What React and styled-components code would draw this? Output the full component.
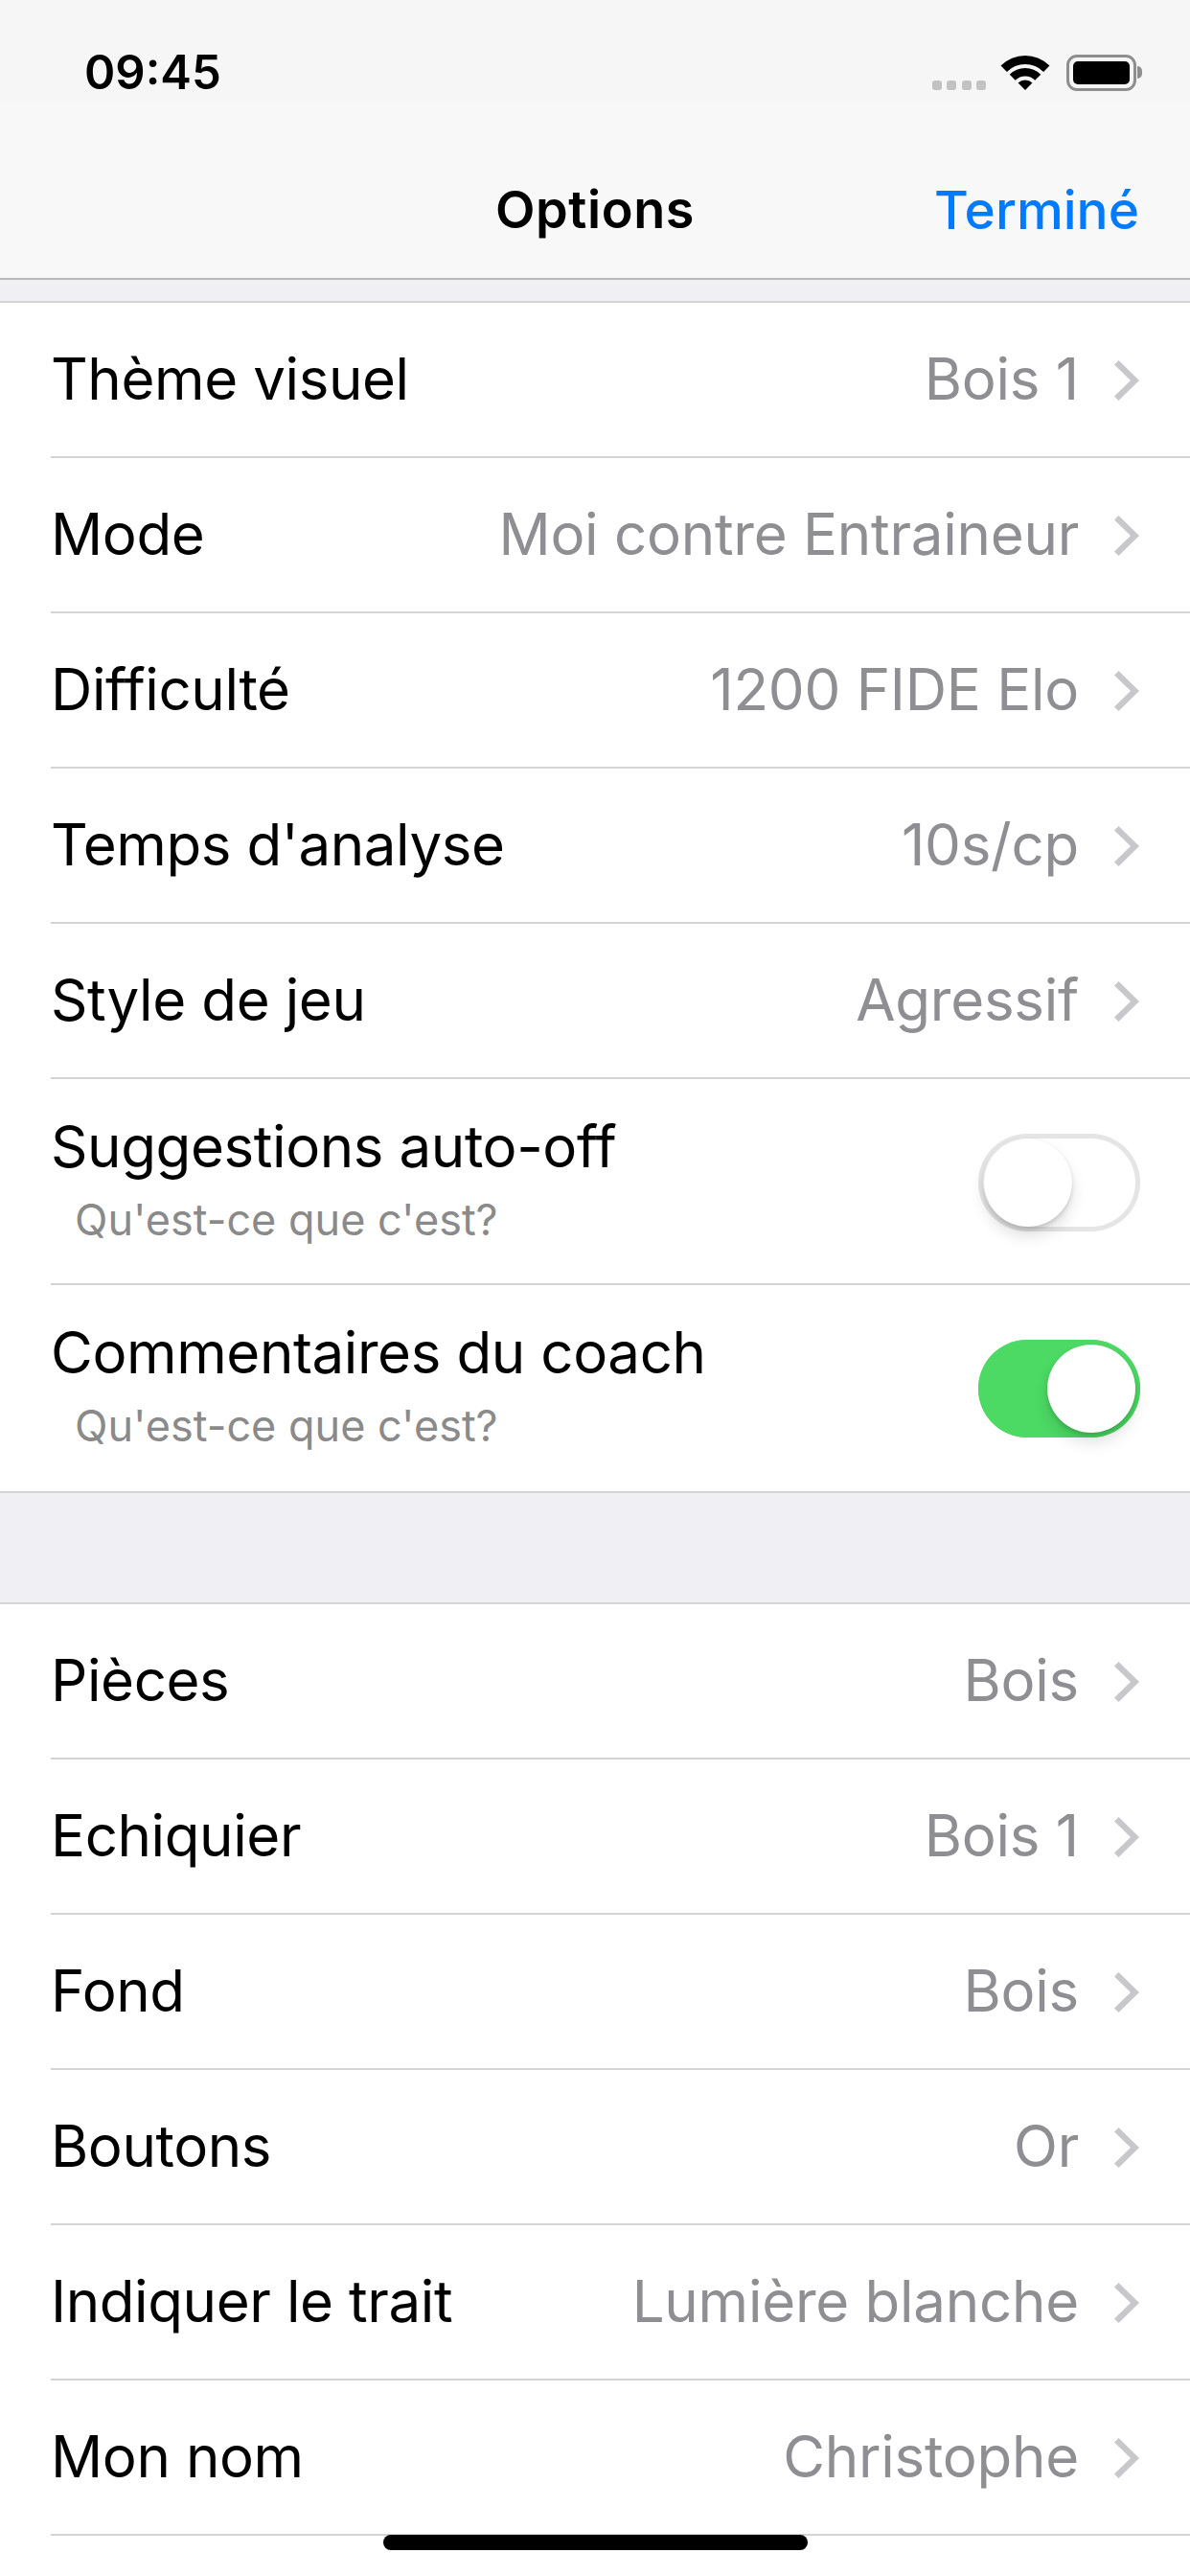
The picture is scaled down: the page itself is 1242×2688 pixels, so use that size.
import React from "react";
import styled, { createGlobalStyle } from "styled-components";

const Global = createGlobalStyle`
  html, body { margin: 0; padding: 0; background: #fff; }
  body { font-family: Inter, "Liberation Sans", sans-serif; -webkit-font-smoothing: antialiased; }
`;

const Screen = styled.div`
  position: relative;
  width: 1242px;
  height: 2688px;
  overflow: hidden;
  background: #fff;
`;
const Header = styled.header`
  background: #f8f8f8;
  height: 290px;
  border-bottom: 2px solid #b8b8ba;
  box-sizing: content-box;
`;
const StatusBar = styled.div`
  height: 105px;
  background: #f6f6f6;
  display: flex;
  align-items: flex-start;
  justify-content: space-between;
  padding: 51px 56px 0 88px;
  box-sizing: border-box;
`;
const Clock = styled.span`
  font-size: 49px;
  line-height: 49px;
  font-weight: 600;
  color: #000;
`;
const StatusIcons = styled.div`
  display: flex;
  align-items: flex-start;
  margin-top: 6px;
`;
const Dots = styled.div`
  display: flex;
  gap: 5.5px;
  margin-top: 27px;
  margin-right: 15px;
`;
const Dot = styled.i`
  display: block;
  width: 10px;
  height: 10px;
  border-radius: 3px;
  background: #c2c2c2;
`;
const Battery = styled.div`
  position: relative;
  width: 73px;
  height: 38px;
  margin-left: 17px;
  padding: 4px;
  box-sizing: border-box;
  border: 3px solid #8e8e8e;
  border-radius: 11px;
  &::after {
    content: "";
    position: absolute;
    right: -9px;
    top: 9px;
    width: 5px;
    height: 13px;
    border-radius: 0 6px 6px 0;
    background: #8e8e8e;
  }
`;
const BatteryFill = styled.div`
  height: 100%;
  background: #000;
  border-radius: 5px;
`;
const NavBar = styled.nav`
  height: 185px;
  display: grid;
  grid-template-columns: 1fr auto 1fr;
  align-items: center;
  padding: 42px 53px 0;
  box-sizing: border-box;
`;
const NavTitle = styled.h1`
  grid-column: 2;
  margin: 0;
  font-size: 54px;
  line-height: 60px;
  font-weight: 600;
  letter-spacing: 0.6px;
  color: #000;
`;
const NavAction = styled.span`
  grid-column: 3;
  justify-self: end;
  font-size: 55px;
  line-height: 60px;
  font-weight: 500;
  color: #007aff;
`;
const Spacer = styled.div`
  height: ${(p) => p.$h}px;
  background: #efeff4;
`;
const Section = styled.section`
  background: #fff;
  border-top: 2px solid #d4d4d8;
  border-bottom: ${(p) => (p.$closed ? "2px solid #d4d4d8" : "0")};
`;
const Row = styled.div`
  position: relative;
  display: flex;
  align-items: center;
  justify-content: space-between;
  height: ${(p) => (p.$tall ? 215 : 162)}px;
  box-sizing: border-box;
  padding: 0 53px 4px 53px;
  &::after {
    content: ${(p) => (p.$last ? "none" : '""')};
    position: absolute;
    left: 53px;
    right: 0;
    bottom: 0;
    height: 2px;
    background: #d4d4d6;
  }
`;
const Label = styled.span`
  font-size: 60px;
  line-height: 60px;
  font-weight: 400;
  letter-spacing: -0.4px;
  color: #000;
  white-space: nowrap;
`;
const Value = styled.span`
  display: flex;
  align-items: center;
  gap: 37px;
  font-size: 60px;
  line-height: 60px;
  letter-spacing: -0.25px;
  color: #8e8e93;
  white-space: nowrap;
`;
const Chevron = styled.svg`
  width: 26px;
  height: 42px;
  margin-top: 4px;
  display: block;
  flex: none;
`;
const LabelStack = styled.div`
  display: flex;
  flex-direction: column;
  gap: 22px;
`;
const Hint = styled.span`
  margin-left: 25px;
  font-size: 45px;
  line-height: 50px;
  color: #8a8a8a;
  white-space: nowrap;
`;
const Track = styled.div`
  position: relative;
  flex: none;
  width: 169px;
  height: 102px;
  margin: 4px -1px 0 0;
  border-radius: 51px;
  background: ${(p) => (p.$on ? "#4cd964" : "#fff")};
  box-shadow: inset 0 0 0 5px ${(p) => (p.$on ? "#4cd964" : "#e5e5e5")};
`;
const Knob = styled.div`
  position: absolute;
  top: 5px;
  left: ${(p) => (p.$on ? 72 : 6)}px;
  width: 92px;
  height: 92px;
  border-radius: 50%;
  background: #fff;
  box-shadow: 0 10px 16px rgba(0, 0, 0, 0.12), 0 3px 4px rgba(0, 0, 0, 0.13), 0 0 1px rgba(0, 0, 0, 0.1);
`;
const HomeBar = styled.div`
  position: absolute;
  left: 400px;
  top: 2645px;
  width: 443px;
  height: 16px;
  border-radius: 8px;
  background: #000;
`;

const Arrow = () => (
  <Chevron viewBox="0 0 26 42" aria-hidden="true">
    <path d="M4.5 0L26 21L4.5 42L0 37.5L17 21L0 4.5Z" fill="#c7c7cc" />
  </Chevron>
);

const NavRow = ({ label, value, last }) => (
  <Row $last={last}>
    <Label>{label}</Label>
    <Value>
      {value}
      <Arrow />
    </Value>
  </Row>
);

const ToggleRow = ({ label, on, last }) => (
  <Row $tall $last={last}>
    <LabelStack>
      <Label>{label}</Label>
      <Hint>Qu'est-ce que c'est?</Hint>
    </LabelStack>
    <Track $on={on}>
      <Knob $on={on} />
    </Track>
  </Row>
);

const first = [
  ["Thème visuel", "Bois 1"],
  ["Mode", "Moi contre Entraineur"],
  ["Difficulté", "1200 FIDE Elo"],
  ["Temps d'analyse", "10s/cp"],
  ["Style de jeu", "Agressif"],
];
const second = [
  ["Pièces", "Bois"],
  ["Echiquier", "Bois 1"],
  ["Fond", "Bois"],
  ["Boutons", "Or"],
  ["Indiquer le trait", "Lumière blanche"],
  ["Mon nom", "Christophe"],
];

export default function App() {
  return (
    <Screen>
      <Global />
      <Header>
        <StatusBar>
          <Clock>09:45</Clock>
          <StatusIcons>
            <Dots>
              <Dot />
              <Dot />
              <Dot />
              <Dot />
            </Dots>
            <svg width="52" height="38" viewBox="-1 0 52 38" aria-hidden="true">
              <path d="M-.45 11.55A36 36 0 0 1 50.45 11.55L44.1 17.9A27 27 0 0 0 5.9 17.9Z" />
              <path d="M8.74 20.74A23 23 0 0 1 41.26 20.74L35.25 26.75A14.5 14.5 0 0 0 14.75 26.75Z" />
              <path d="M17.58 29.58A10.5 10.5 0 0 1 32.42 29.58L25 37Z" />
            </svg>
            <Battery>
              <BatteryFill />
            </Battery>
          </StatusIcons>
        </StatusBar>
        <NavBar>
          <NavTitle>Options</NavTitle>
          <NavAction>Terminé</NavAction>
        </NavBar>
      </Header>
      <Spacer $h={22} />
      <Section $closed>
        {first.map(([l, v]) => (
          <NavRow key={l} label={l} value={v} />
        ))}
        <ToggleRow label="Suggestions auto-off" on={false} />
        <ToggleRow label="Commentaires du coach" on last />
      </Section>
      <Spacer $h={114} />
      <Section>
        {second.map(([l, v]) => (
          <NavRow key={l} label={l} value={v} />
        ))}
      </Section>
      <HomeBar />
    </Screen>
  );
}
